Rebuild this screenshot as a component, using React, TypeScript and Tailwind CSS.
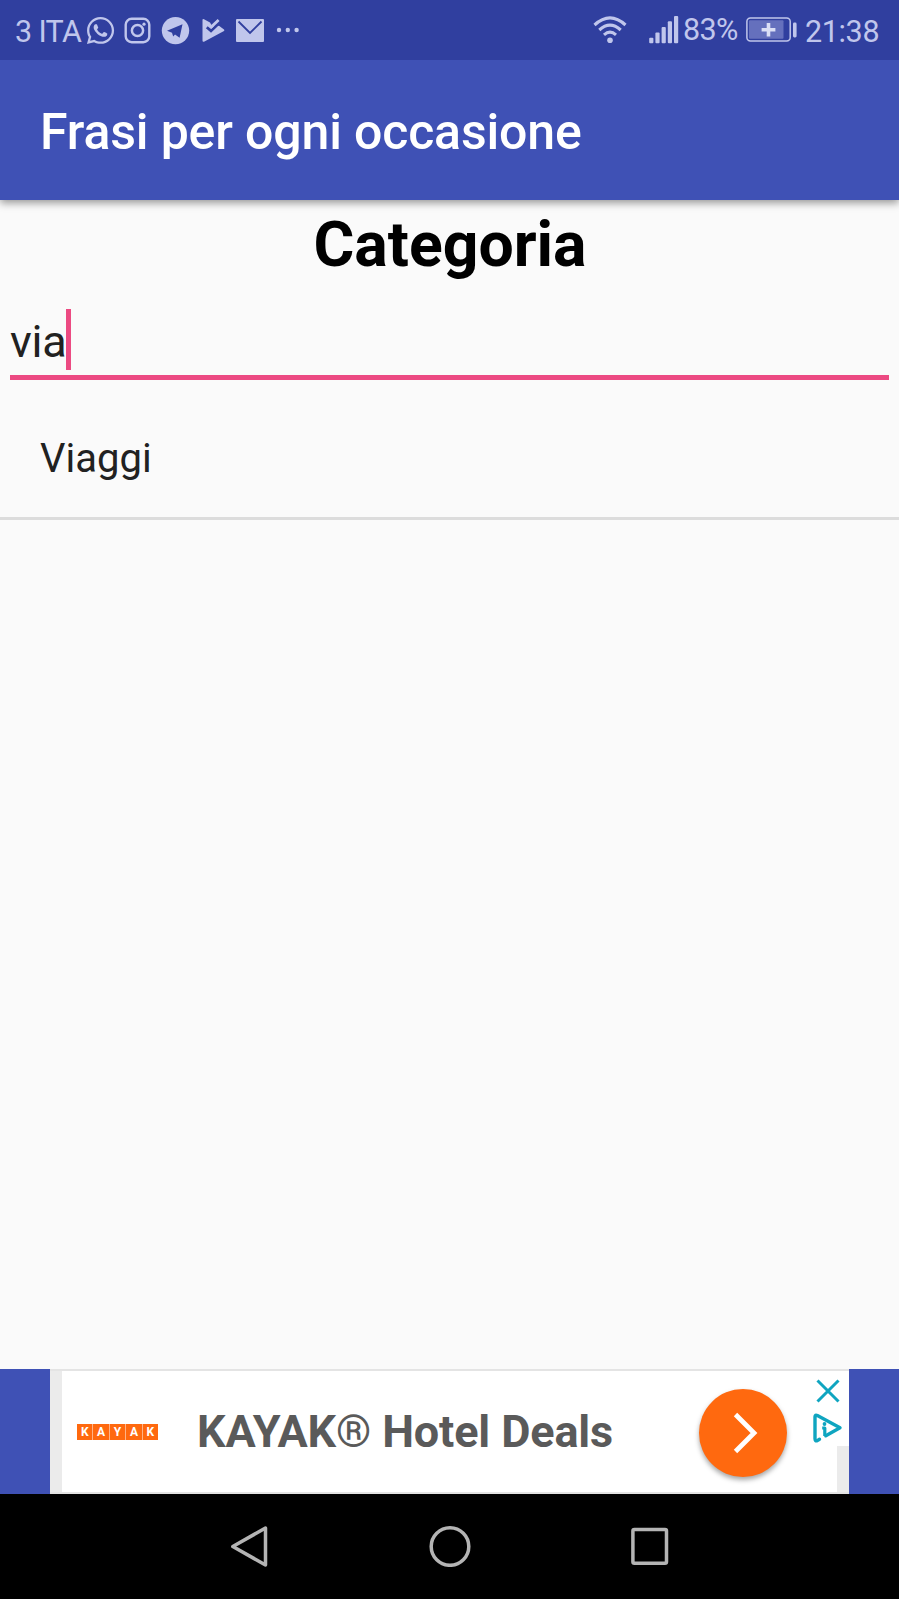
import { FaWhatsapp } from "react-icons/fa";

function StatusBar() {
  return (
    <div className="relative z-10 flex h-[60px] items-start bg-[#303f9f] text-[30.5px] leading-[30px] text-[#c0c6ec]">
      <span className="mt-[17px] ml-[15px] w-[71px] whitespace-nowrap tracking-[-0.65px]">3 ITA</span>
      <FaWhatsapp className="mt-[15px] h-[31px] w-[31px] -ml-[1px] shrink-0" />
      <svg className="mt-[17px] ml-[8px] h-[27px] w-[27px] shrink-0" viewBox="0 0 27 27" fill="none" stroke="currentColor">
        <rect x="1.7" y="1.8" width="23.6" height="23.4" rx="6" strokeWidth="2.4" />
        <circle cx="13.5" cy="13.5" r="5.6" strokeWidth="2.5" />
        <circle cx="20" cy="7.2" r="1.6" fill="currentColor" stroke="none" />
      </svg>
      <svg className="mt-[16px] ml-[10px] h-[29px] w-[29px] shrink-0" viewBox="0 0 29 29">
        <circle cx="14.5" cy="14.6" r="13.7" fill="currentColor" />
        <path d="M6 14.8 21.5 8.2 18.6 21.8 14 18.4 12.2 20.4 11 16.8Z" fill="#303f9f" />
      </svg>
      <svg className="mt-[17px] ml-[11px] h-[27px] w-[24px] shrink-0" viewBox="0 0 24 27">
        <path d="M3 2.2 9 5.6 11 9 18 8.8 23 12.6Q23.8 13.3 23 14L3 24.7Q1.5 25.2 1.5 23.5V3Q1.5 1.5 3 2.2Z" fill="currentColor" />
        <path d="M5.8 10.2 10 13.9 19.2 5" fill="none" stroke="#303f9f" strokeWidth="2.8" />
        <path d="M6.5 6.6 10.4 9.8 17.6 3" fill="none" stroke="currentColor" strokeWidth="2.8" />
      </svg>
      <svg className="mt-[18px] ml-[10px] h-[25px] w-[30px] shrink-0" viewBox="0 0 30 25">
        <rect x="1" y="1" width="28" height="23" rx="1" fill="currentColor" />
        <path d="M3.5 3.5 15 15 26.5 3.5" fill="none" stroke="#303f9f" strokeWidth="1.8" />
      </svg>
      <svg className="mt-[26px] ml-[11px] h-[8px] w-[24px] shrink-0" viewBox="0 0 24 8" fill="currentColor">
        <circle cx="3" cy="4" r="2.2" />
        <circle cx="11.8" cy="4" r="2.2" />
        <circle cx="20.6" cy="4" r="2.2" />
      </svg>
      <div className="flex-1" />
      <svg className="mt-[15px] mr-[22px] h-[29px] w-[34px] shrink-0" viewBox="0 0 34 29" fill="none" stroke="currentColor" strokeWidth="3.1">
        <path d="M1.5 10Q17-4.2 32.5 10" />
        <path d="M6.3 15Q17 5.2 27.7 15" />
        <path d="M11 19.8Q17 14.6 23 19.8" />
        <circle cx="17" cy="25.2" r="2.8" fill="currentColor" stroke="none" />
      </svg>
      <svg className="mt-[15px] mr-[4px] h-[29px] w-[30px] shrink-0" viewBox="0 0 30 29" fill="currentColor">
        <rect x="0.2" y="22.8" width="4.2" height="5.4" rx="1" />
        <rect x="6.4" y="17.5" width="4.2" height="10.7" rx="1" />
        <rect x="12.6" y="12" width="4.2" height="16.2" rx="1" />
        <rect x="18.8" y="6.3" width="4.2" height="21.9" rx="1" />
        <rect x="25" y="1" width="4.2" height="27.2" rx="1" />
      </svg>
      <span className="mt-[15px] w-[63px] whitespace-nowrap tracking-[-0.7px]">83%</span>
      <svg className="mt-[16px] h-[28px] w-[52px] shrink-0" viewBox="0 0 52 28">
        <rect x="0.9" y="1.9" width="43.3" height="23.2" rx="3.5" fill="none" stroke="currentColor" strokeWidth="1.5" />
        <rect x="3" y="4.2" width="34.5" height="18.6" rx="1" fill="#6570bd" />
        <path d="M22.5 7v13.6M15.6 13.8h13.8" stroke="#dadef5" strokeWidth="3.6" />
        <rect x="47" y="6.5" width="3.6" height="15" rx="1.4" fill="currentColor" />
      </svg>
      <span className="mt-[17px] ml-[7px] w-[94px] whitespace-nowrap tracking-[-0.35px]">21:38</span>
    </div>
  );
}

function AdBanner() {
  return (
    <div className="flex h-[125px] justify-between bg-[#3f51b5]">
      <div className="ml-[50px] flex w-[799px] border-y-2 border-[#e4e4e4] bg-white">
        <div className="w-[12px] bg-[#ebebeb]" />
        <div className="mt-[53px] ml-[15px] flex h-[16px] w-[81px] gap-px bg-[#ffb387]">
          {["K", "A", "Y", "A", "K"].map((c, i) => (
            <span key={i} className="flex h-full flex-1 items-center justify-center bg-[#ff690f] text-[12px] leading-none font-bold text-white">
              {c}
            </span>
          ))}
        </div>
        <div className="mt-[33px] ml-[39px] w-[502px] text-[45px] leading-[56px] font-bold tracking-[-0.15px] whitespace-nowrap text-[#5a5a5a]">
          KAYAK® Hotel Deals
        </div>
        <div className="mt-[18px] flex h-[88px] w-[88px] shrink-0 items-center justify-center rounded-full bg-[#ff690f] shadow-[0_3px_5px_rgba(0,0,0,0.35)]">
          <svg className="ml-[4px] h-[42px] w-[26px]" viewBox="0 0 26 42">
            <path d="M3.5 2.5 22 21 3.5 39.5" fill="none" stroke="white" strokeWidth="4.8" />
          </svg>
        </div>
        <div className="flex flex-1 flex-col items-end">
          <svg className="mt-[7px] mr-[8px] h-[26px] w-[26px]" viewBox="0 0 26 26">
            <path d="M2.5 2.5 23.5 23.5M23.5 2.5 2.5 23.5" fill="none" stroke="#0fa5c0" strokeWidth="3" />
          </svg>
          <svg className="mt-[8px] mr-[6px] h-[32px] w-[31px]" viewBox="0 0 31 32" fill="none" stroke="#0fa5c0" strokeWidth="3.4" strokeLinejoin="round" strokeLinecap="round">
            <path d="M7.5 27.2 5.3 28.6Q3 29.4 3 26.8V4.8Q3 2.4 5.4 3.5L28 15.8 13.8 23.8" />
            <path d="M10.2 16H12.8V24" strokeWidth="3.2" strokeLinecap="butt" />
            <circle cx="12.5" cy="12" r="1.9" fill="#0fa5c0" stroke="none" />
          </svg>
          <div className="mt-[2px] w-[12px] flex-1 bg-[#ebebeb]" />
        </div>
      </div>
    </div>
  );
}

function NavigationBar() {
  return (
    <div className="flex h-[105px] items-start justify-center gap-[158px] bg-black pt-[31px]">
      <svg className="h-[42px] w-[42px]" viewBox="0 0 42 42" fill="none" stroke="#b4b4b4" strokeWidth="3.5" strokeLinejoin="round">
        <path d="M36.5 3V40L3.8 21.5Z" />
      </svg>
      <svg className="h-[42px] w-[42px]" viewBox="0 0 42 42" fill="none" stroke="#b4b4b4" strokeWidth="3.5">
        <circle cx="21" cy="21.5" r="18.8" />
      </svg>
      <svg className="h-[42px] w-[42px]" viewBox="0 0 42 42" fill="none" stroke="#b4b4b4" strokeWidth="3.5">
        <rect x="3.9" y="4.6" width="33.6" height="33.6" rx="1.5" />
      </svg>
    </div>
  );
}

export default function App() {
  return (
    <div className="flex h-[1599px] w-[899px] flex-col overflow-hidden bg-[#fafafa] font-['Roboto',sans-serif]">
      <StatusBar />
      <header className="flex h-[140px] shrink-0 items-center bg-[#3f51b5] pl-[40px] shadow-[0_3px_8px_rgba(0,0,0,0.4)]">
        <h1 className="mt-[3px] text-[50px] leading-[60px] font-medium tracking-[-0.15px] whitespace-nowrap text-white">Frasi per ogni occasione</h1>
      </header>
      <main className="flex flex-1 flex-col">
        <h2 className="mt-[9px] pl-px text-center text-[62.5px] leading-[72px] font-bold text-black">Categoria</h2>
        <div className="mx-[10px] mt-[28px] flex h-[71px] items-start border-b-[5px] border-[#ec4a82]">
          <span className="mt-[5px] w-[56px] text-[45px] leading-[56px] whitespace-nowrap tracking-[-0.3px] text-[#212121]">via</span>
          <span className="h-[61px] w-[5px] bg-[#ec4a82]" />
        </div>
        <ul>
          <li className="flex h-[140px] items-center border-b-[3px] border-[#dcdcdc] pl-[40px] text-[40px] leading-[48px] text-[#212121]">
            <span className="mt-[21px]">Viaggi</span>
          </li>
        </ul>
      </main>
      <AdBanner />
      <NavigationBar />
    </div>
  );
}
